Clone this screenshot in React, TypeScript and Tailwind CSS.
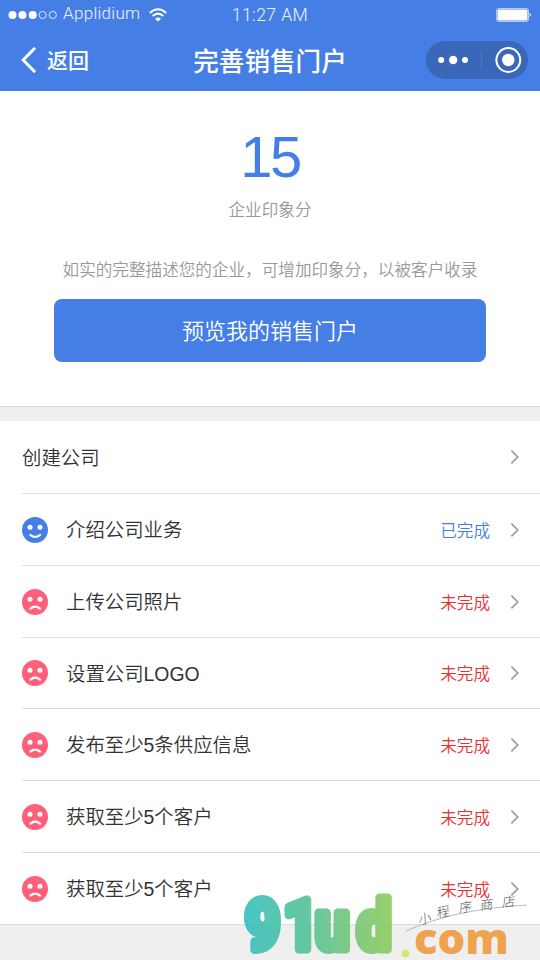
import clsx from "clsx";

interface Task {
  title: string;
  done: boolean;
  height: string;
}

const tasks: Task[] = [
  { title: "介绍公司业务", done: true, height: "h-18" },
  { title: "上传公司照片", done: false, height: "h-18" },
  { title: "设置公司LOGO", done: false, height: "h-[71px]" },
  { title: "发布至少5条供应信息", done: false, height: "h-18" },
  { title: "获取至少5个客户", done: false, height: "h-18" },
  { title: "获取至少5个客户", done: false, height: "h-18" },
];

function Face({ happy }: { happy: boolean }) {
  return (
    <svg viewBox="0 0 26 26" className="size-[26px] shrink-0">
      <circle cx="13" cy="13" r="13" fill={happy ? "#457fe6" : "#ff5f7a"} />
      <circle cx="8" cy="10.3" r="2.5" fill="#fff" />
      <circle cx="18" cy="10.3" r="2.5" fill="#fff" />
      <path
        d={happy ? "M8.4 18Q13.2 21.8 18 18" : "M8.4 19.6Q13.2 15.8 18 19.6"}
        fill="none"
        stroke="#fff"
        strokeWidth="2.2"
        strokeLinecap="round"
      />
    </svg>
  );
}

function Chevron() {
  return (
    <svg viewBox="0 0 10 16" className="h-4 w-2.5 shrink-0">
      <path d="M1.4 1.6L7.8 8L1.4 14.4" fill="none" stroke="#999" strokeWidth="1.6" />
    </svg>
  );
}

function StatusBar() {
  return (
    <div className="grid h-[29px] grid-cols-3 items-center text-[17px] font-light text-white/90">
      <div className="flex items-center pl-2">
        <svg viewBox="0 0 50 10" className="h-2.5 w-[50px]">
          <circle cx="4.5" cy="5" r="4" fill="#fff" />
          <circle cx="14.5" cy="5" r="4" fill="#fff" />
          <circle cx="24.7" cy="5" r="4" fill="#fff" />
          <circle cx="34.7" cy="5" r="3.6" fill="none" stroke="#fff" strokeWidth="0.8" />
          <circle cx="44.8" cy="5" r="3.6" fill="none" stroke="#fff" strokeWidth="0.8" />
        </svg>
        <span className="ml-[5px] -mt-0.5 tracking-[0.3px]">Applidium</span>
        <svg viewBox="0 0 18 14" className="ml-2 h-3.5 w-[18px]" fill="none" stroke="#fff" strokeWidth="2">
          <path d="M0.8 5Q9 -2.5 17.2 5" />
          <path d="M3.7 8Q9 3.2 14.3 8" />
          <path d="M6 10.8Q9 8 12 10.8L9 13.6Z" fill="#fff" stroke="none" />
        </svg>
      </div>
      <span className="pt-px text-center text-[17.6px] tracking-[0.4px]">11:27 AM</span>
      <div className="flex justify-end pr-2">
        <svg viewBox="0 0 36 14" className="h-3.5 w-9">
          <rect x="0.5" y="0.5" width="32" height="13" rx="2" fill="#457fe6" stroke="#b5ccf5" />
          <rect x="1.5" y="1.5" width="30" height="11" rx="0.8" fill="#fff" />
          <path d="M33.7 4.8Q36 7 33.7 9.2Z" fill="#fff" />
        </svg>
      </div>
    </div>
  );
}

function NavBar() {
  return (
    <div className="grid h-[62px] grid-cols-3 items-center text-white">
      <div className="flex items-center pl-[21px]">
        <svg viewBox="0 0 15 26" className="h-[26px] w-[15px]">
          <path d="M13.2 1.8L2.2 13L13.2 24.2" fill="none" stroke="#fff" strokeWidth="3" strokeLinecap="round" />
        </svg>
        <span className="ml-[11px] pt-[3px] text-[21px] font-medium">返回</span>
      </div>
      <span className="pt-1 text-center text-[25.6px] font-medium whitespace-nowrap">完善销售门户</span>
      <div className="flex justify-end pr-3">
        <div className="flex h-[38px] w-[102px] items-center rounded-full bg-[#3a67b7]">
          <svg viewBox="0 0 102 38" className="h-[38px] w-[102px]">
            <circle cx="15.2" cy="19" r="3" fill="#fff" />
            <circle cx="27.2" cy="19" r="4.2" fill="#fff" />
            <circle cx="39" cy="19" r="3" fill="#fff" />
            <path d="M55.4 10V28" stroke="#5079c1" />
            <circle cx="82.3" cy="19" r="11.9" fill="none" stroke="#fff" strokeWidth="2" />
            <circle cx="82.3" cy="19" r="6.2" fill="#fff" />
          </svg>
        </div>
      </div>
    </div>
  );
}

function TaskRow({ task, last }: { task: Task; last: boolean }) {
  return (
    <li className={clsx("flex pl-[22px]", task.height, last && "border-b border-[#dcdcdc]")}>
      <div className={clsx("flex flex-1 items-center pr-5", !last && "border-b border-[#dedede]")}>
        <Face happy={task.done} />
        <span className="ml-[18px] flex-1 pt-[3px] text-[19.4px] text-[#333]">{task.title}</span>
        <span className={clsx("mr-5 pt-[5px] text-[16.6px]", task.done ? "text-[#457fe6]" : "text-[#e83030]")}>
          {task.done ? "已完成" : "未完成"}
        </span>
        <Chevron />
      </div>
    </li>
  );
}

function Watermark() {
  return (
    <svg
      viewBox="0 0 300 78"
      className="pointer-events-none absolute right-0 bottom-0 h-[78px] w-[300px] overflow-visible"
    >
      <defs>
        <linearGradient id="brand" gradientUnits="userSpaceOnUse" x1="3" y1="0" x2="174" y2="0">
          <stop offset="0" stopColor="#35bfc0" />
          <stop offset="0.4" stopColor="#53c29a" />
          <stop offset="1" stopColor="#8fcb5c" />
        </linearGradient>
      </defs>
      <g opacity="0.9">
        <text
          transform="scale(0.88 1)"
          x="6 49.5 85.5 133"
          y="67"
          fill="url(#brand)"
          stroke="url(#brand)"
          strokeWidth="9"
          strokeLinejoin="round"
          className="font-['Roboto'] text-[69px] font-bold"
        >
          91ud
        </text>
        <circle cx="165.5" cy="71.5" r="3.8" fill="#d6e264" />
        <text
          x="174"
          y="71.5"
          textLength="95"
          lengthAdjust="spacingAndGlyphs"
          fill="#f09a3e"
          className="font-['Open_Sans'] text-[43px] font-extrabold"
        >
          com
        </text>
      </g>
      <path d="M166 49Q215 27 287 23" fill="none" stroke="#aaa" strokeWidth="0.8" />
      <g fill="#555" className="text-[13px] font-light">
        <text transform="translate(179 43) rotate(-14) skewX(-10)">小</text>
        <text transform="translate(197 36) rotate(-12) skewX(-10)">程</text>
        <text transform="translate(219 31) rotate(-9) skewX(-10)">序</text>
        <text transform="translate(240 28) rotate(-6) skewX(-10)">商</text>
        <text transform="translate(262 25) rotate(-6) skewX(-10)">店</text>
      </g>
    </svg>
  );
}

export default function App() {
  return (
    <div className="relative h-[960px] w-[540px] overflow-hidden bg-[#efefef] font-['Liberation_Sans','Noto_Sans_CJK_SC',sans-serif]">
      <header className="h-[91px] bg-[#457fe6] font-['Roboto','Noto_Sans_CJK_SC',sans-serif]">
        <StatusBar />
        <NavBar />
      </header>

      <section className="flex h-[316px] flex-col items-center border-b border-[#dcdcdc] bg-white">
        <span className="mt-9 text-[58px] leading-[60px] tracking-[-2.5px] text-[#457fe6]">15</span>
        <span className="mt-3 text-[16.6px] leading-6 font-[350] text-[#999]">企业印象分</span>
        <p className="mt-9 text-[16.6px] leading-6 font-[350] text-[#999]">
          如实的完整描述您的企业，可增加印象分，以被客户收录
        </p>
        <button className="mt-4 h-[63px] w-[432px] rounded-lg bg-[#457fe6] pt-0.5 text-[22px] font-[350] text-white">
          预览我的销售门户
        </button>
      </section>

      <ul className="mt-3.5 bg-white font-[350]">
        <li className="flex h-[73px] pl-[22px]">
          <div className="flex flex-1 items-center justify-between border-b border-[#dedede] pr-5">
            <span className="pt-[3px] text-[19.4px] text-[#333]">创建公司</span>
            <Chevron />
          </div>
        </li>
        {tasks.map((task, i) => (
          <TaskRow key={i} task={task} last={i === tasks.length - 1} />
        ))}
      </ul>

      <Watermark />
    </div>
  );
}
